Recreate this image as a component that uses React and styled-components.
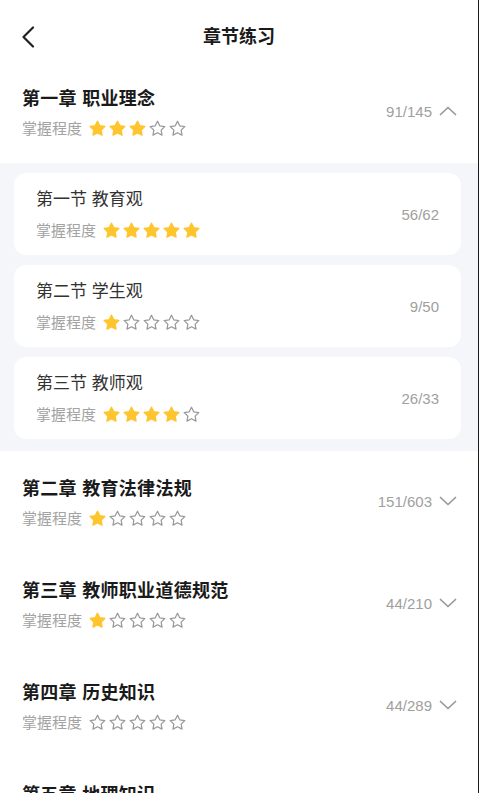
import React from "react";
import styled, { createGlobalStyle } from "styled-components";

const GlobalStyle = createGlobalStyle`
  html, body {
    margin: 0;
    padding: 0;
    overflow: hidden;
    background: #fff;
  }
  body {
    font-family: "Liberation Sans", "Noto Sans CJK SC", sans-serif;
  }
`;

const Page = styled.div`
  width: 478px;
  min-height: 793px;
  background: #fff;
  border-right: 1px solid #1a1a1a;
`;

const Header = styled.div`
  height: 61px;
  box-sizing: border-box;
  padding-top: 12px;
  display: grid;
  grid-template-columns: 1fr auto 1fr;
  align-items: center;
`;

const BackButton = styled.button`
  border: none;
  background: none;
  padding: 0;
  margin-left: 21px;
  width: 16px;
  height: 24px;
  display: flex;
  align-items: center;
  cursor: pointer;
`;

const Title = styled.h1`
  margin: 0;
  font-size: 18px;
  font-weight: 600;
  color: #1a1a1a;
  line-height: 26px;
`;

const ChapterRow = styled.div`
  height: 102px;
  box-sizing: border-box;
  padding: 0 21px 0 22px;
  display: flex;
  align-items: center;
  justify-content: space-between;
`;

const Info = styled.div`
  display: flex;
  flex-direction: column;
  gap: ${(p) => (p.$small ? "9px" : "7px")};
`;

const ChapterName = styled.div`
  font-size: 18px;
  font-weight: 600;
  color: #1a1a1a;
  line-height: 26px;
  letter-spacing: 0.3px;
`;

const SectionName = styled.div`
  font-size: 17px;
  color: #333;
  line-height: 24px;
`;

const Rating = styled.div`
  display: flex;
  align-items: center;
  height: 20px;
`;

const Label = styled.span`
  font-size: 15px;
  color: #a3a3a3;
  margin-right: 6px;
  line-height: 20px;
`;

const Stars = styled.div`
  display: flex;
  gap: 1px;
`;

const Right = styled.div`
  display: flex;
  align-items: center;
  gap: 7px;
  margin-top: -2px;
`;

const Count = styled.span`
  font-size: 15px;
  color: #a0a0a0;
`;

const Sections = styled.div`
  background: #f5f6fa;
  padding: 10px 17px 12px 14px;
  display: flex;
  flex-direction: column;
  gap: 10px;
`;

const Card = styled.div`
  height: 82px;
  box-sizing: border-box;
  background: #fff;
  border-radius: 12px;
  padding: 0 22px;
  display: flex;
  align-items: center;
  justify-content: space-between;
`;

const STAR = "M12 2.8l2.85 5.78 6.38.93-4.62 4.5 1.09 6.35L12 17.37l-5.7 2.99 1.09-6.35-4.62-4.5 6.38-.93z";

const Star = ({ on }) => (
  <svg width="19" height="19" viewBox="0 0 24 24">
    <path
      d={STAR}
      fill={on ? "#ffc52e" : "none"}
      stroke={on ? "#ffc52e" : "#9a9a9a"}
      strokeWidth={on ? 1.8 : 1.6}
      strokeLinejoin="round"
    />
  </svg>
);

const Mastery = ({ level }) => (
  <Rating>
    <Label>掌握程度</Label>
    <Stars>
      {[0, 1, 2, 3, 4].map((i) => (
        <Star key={i} on={i < level} />
      ))}
    </Stars>
  </Rating>
);

const Chevron = ({ up }) => (
  <svg width="18" height="10" viewBox="0 0 18 10">
    <path
      d={up ? "M1.5 8.5L9 1.5l7.5 7" : "M1.5 1.5L9 8.5l7.5-7"}
      fill="none"
      stroke="#999"
      strokeWidth="1.7"
      strokeLinecap="round"
      strokeLinejoin="round"
    />
  </svg>
);

const chapters = [
  {
    name: "第一章 职业理念",
    level: 3,
    count: "91/145",
    open: true,
    sections: [
      { name: "第一节 教育观", level: 5, count: "56/62" },
      { name: "第二节 学生观", level: 1, count: "9/50" },
      { name: "第三节 教师观", level: 4, count: "26/33" },
    ],
  },
  { name: "第二章 教育法律法规", level: 1, count: "151/603" },
  { name: "第三章 教师职业道德规范", level: 1, count: "44/210" },
  { name: "第四章 历史知识", level: 0, count: "44/289" },
  { name: "第五章 地理知识", level: 0, count: "12/198" },
];

export default function App() {
  return (
    <Page>
      <GlobalStyle />
      <Header>
        <BackButton>
          <svg width="14" height="22" viewBox="0 0 14 22">
            <path
              d="M12 1.5L2.5 11l9.5 9.5"
              fill="none"
              stroke="#222"
              strokeWidth="2.2"
              strokeLinecap="round"
              strokeLinejoin="round"
            />
          </svg>
        </BackButton>
        <Title>章节练习</Title>
        <div />
      </Header>
      {chapters.map((c) => (
        <React.Fragment key={c.name}>
          <ChapterRow>
            <Info>
              <ChapterName>{c.name}</ChapterName>
              <Mastery level={c.level} />
            </Info>
            <Right>
              <Count>{c.count}</Count>
              <Chevron up={c.open} />
            </Right>
          </ChapterRow>
          {c.open && (
            <Sections>
              {c.sections.map((s) => (
                <Card key={s.name}>
                  <Info $small>
                    <SectionName>{s.name}</SectionName>
                    <Mastery level={s.level} />
                  </Info>
                  <Count>{s.count}</Count>
                </Card>
              ))}
            </Sections>
          )}
        </React.Fragment>
      ))}
    </Page>
  );
}
